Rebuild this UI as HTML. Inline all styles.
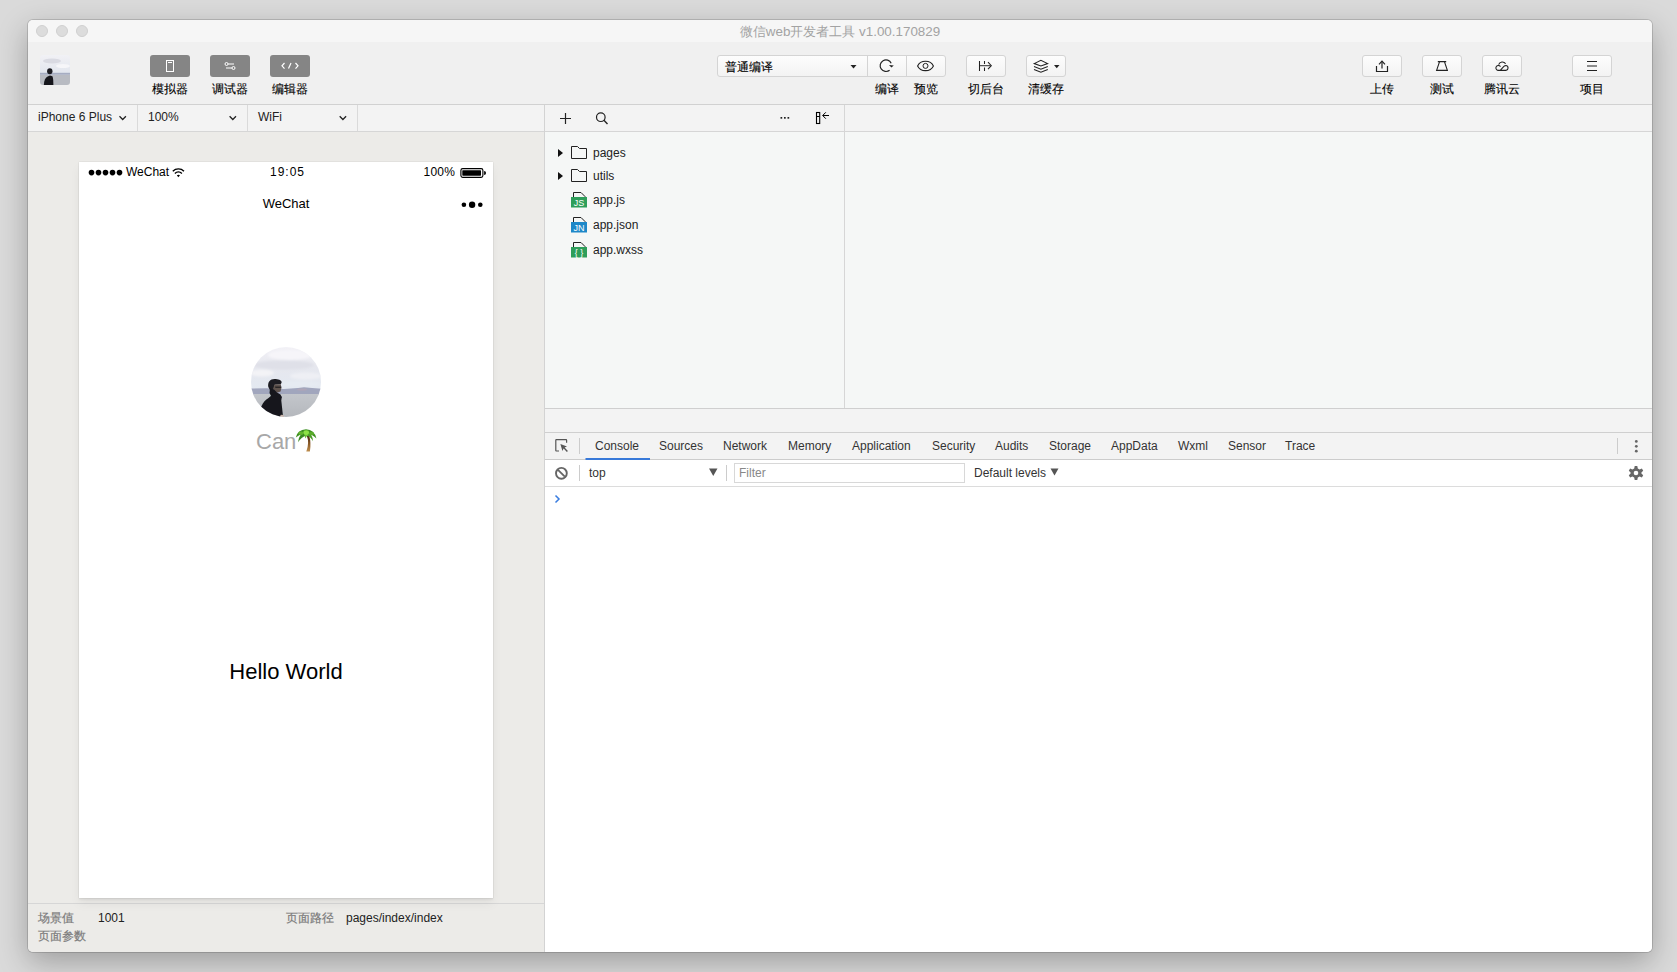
<!DOCTYPE html>
<html><head><meta charset="utf-8">
<style>
*{margin:0;padding:0;box-sizing:border-box}
html,body{width:1677px;height:972px;overflow:hidden}
body{background:#dadada;font-family:"Liberation Sans",sans-serif;position:relative;color:#222}
.a{position:absolute}
#win{left:28px;top:20px;width:1624px;height:932px;border-radius:5px;overflow:hidden;background:#f0f0f0;
 box-shadow:0 0 0 1px rgba(0,0,0,0.14),0 10px 30px rgba(0,0,0,0.28)}
#in{left:-28px;top:-20px;width:1677px;height:972px}
#title{left:28px;top:20px;width:1624px;height:22px;background:#f6f6f6}
.tl{top:25px;width:12px;height:12px;border-radius:50%;background:#dcdcdc;border:1px solid #cfcfcf}
#ttext{left:28px;top:22.6px;width:1624px;text-align:center;font-size:13.4px;color:#a3a3a3}
#tb{left:28px;top:42px;width:1624px;height:63px;background:#f0f0f0;border-bottom:1px solid #d1d1d1}
.gbtn{top:55px;width:40px;height:22px;border-radius:3px;background:#858585}
.lbl{top:82px;font-size:12px;color:#000;-webkit-text-stroke:0.12px #000;text-align:center;width:60px;line-height:14px}
.wbtn{top:55px;height:22px;border:1px solid #d4d4d4;border-radius:3px;background:linear-gradient(#fdfdfd,#f3f3f3)}
svg{position:absolute;overflow:visible}
.st{top:110px;font-size:12px;line-height:14px;color:#222}
.ph{font-size:12px;line-height:14px;color:#000}
.ft{font-size:12px;line-height:14px}
.tr{font-size:12px;line-height:14px;color:#222}
.tab{top:439px;font-size:12px;line-height:14px;color:#333}
.ct{top:466px;font-size:12px;line-height:14px}
</style></head>
<body>
<div id="win" class="a"><div id="in" class="a">
  <div id="title" class="a"></div>
  <div class="a tl" style="left:36px"></div>
  <div class="a tl" style="left:56px"></div>
  <div class="a tl" style="left:76px"></div>
  <div id="ttext" class="a">微信web开发者工具 v1.00.170829</div>
  <div id="tb" class="a"></div>
  <!-- avatar -->
  <svg width="1677" height="972" style="left:0;top:0">
    <defs><clipPath id="sa"><rect x="40" y="55" width="30" height="30" rx="3"/></clipPath>
    <linearGradient id="sky2" x1="0" y1="0" x2="0" y2="1"><stop offset="0" stop-color="#f1f1f5"/><stop offset="1" stop-color="#e2e6ee"/></linearGradient></defs>
    <g clip-path="url(#sa)">
      <rect x="40" y="55" width="30" height="18" fill="url(#sky2)"/>
      <g filter="url(#bl2)"><ellipse cx="52" cy="61" rx="9" ry="2.5" fill="#d9dae2"/><ellipse cx="63" cy="66" rx="7" ry="2" fill="#f6f6f9"/></g>
      <rect x="40" y="72.8" width="30" height="2" fill="#a6adc2"/>
      <rect x="40" y="75" width="30" height="10" fill="#b8bbc2"/>
      <g filter="url(#bl2)">
        <path d="M43.8,85.5 C44,80.5 45.2,77.8 47.6,76.6 L50,75.6 L52.4,76.2 Q53.4,78 53.4,85.5 Z" fill="#17191e"/>
        <ellipse cx="49.8" cy="71.2" rx="2.7" ry="3" fill="#1c1d22"/>
      </g>
    </g>
  </svg>
  <!-- gray buttons -->
  <div class="a gbtn" style="left:150px"></div>
  <div class="a gbtn" style="left:210px"></div>
  <div class="a gbtn" style="left:270px"></div>
  <svg width="1677" height="972" style="left:0;top:0">
    <g fill="none" stroke="#fff" stroke-width="1">
      <rect x="166.5" y="60.5" width="7" height="11"/>
      <line x1="168" y1="62.5" x2="172" y2="62.5"/>
      <circle cx="226.5" cy="64" r="1.5"/>
      <line x1="228" y1="64" x2="234" y2="64"/>
      <line x1="226" y1="68" x2="232" y2="68"/>
      <circle cx="233.5" cy="68" r="1.5"/>
      <polyline points="284.5,63 282,65.8 284.5,68.6" stroke-width="1.2"/>
      <line x1="288.5" y1="68.6" x2="291" y2="63" stroke-width="1.2"/>
      <polyline points="295.5,63 298,65.8 295.5,68.6" stroke-width="1.2"/>
    </g>
  </svg>
  <div class="a lbl" style="left:140px">模拟器</div>
  <div class="a lbl" style="left:200px">调试器</div>
  <div class="a lbl" style="left:260px">编辑器</div>

  <!-- compile select group -->
  <div class="a wbtn" style="left:717px;width:229px"></div>
  <div class="a" style="left:867px;top:55px;width:1px;height:22px;background:#d4d4d4"></div>
  <div class="a" style="left:906px;top:55px;width:1px;height:22px;background:#d4d4d4"></div>
  <div class="a" style="left:725px;top:60px;font-size:12px;line-height:14px;color:#000;-webkit-text-stroke:0.12px #000">普通编译</div>
  <div class="a wbtn" style="left:966px;width:40px"></div>
  <div class="a wbtn" style="left:1026px;width:40px"></div>
  <div class="a wbtn" style="left:1362px;width:40px"></div>
  <div class="a wbtn" style="left:1422px;width:40px"></div>
  <div class="a wbtn" style="left:1482px;width:40px"></div>
  <div class="a wbtn" style="left:1572px;width:40px"></div>
  <svg width="1677" height="972" style="left:0;top:0">
    <g fill="#222"><polygon points="850.5,65 856.5,65 853.5,68.5"/>
      <polygon points="1054,65 1059.5,65 1056.75,68.2"/></g>
    <g fill="none" stroke="#222" stroke-width="1.2">
      <path d="M889.6,70.2 A5.8,5.8 0 1 1 891.2,63.2"/>
      <path d="M917.6,65.9 C920.5,59.6 930.5,59.6 933.4,65.9 C930.5,72.2 920.5,72.2 917.6,65.9 Z" stroke-width="1.1"/>
      <circle cx="925.5" cy="65.9" r="2.5" stroke-width="1"/>
      <g stroke-width="1.05">
      <line x1="979.5" y1="61" x2="979.5" y2="71"/>
      <line x1="984.5" y1="61" x2="984.5" y2="64"/>
      <line x1="984.5" y1="67.5" x2="984.5" y2="71"/>
      <line x1="980" y1="65.6" x2="990.5" y2="65.6" stroke="#555"/>
      <polyline points="988,62.2 991.3,65.7 988,69.2"/>
      <polygon points="1034.2,63.6 1040.9,60.4 1047.6,63.6 1040.9,66"/>
      <polyline points="1034,66.5 1040.9,69.3 1047.8,66.5"/>
      <polyline points="1034,69.4 1040.9,72.3 1047.8,69.4"/>
      </g>
      <polyline points="1376.5,66 1376.5,71.5 1387.5,71.5 1387.5,66"/>
      <line x1="1382" y1="61.5" x2="1382" y2="68.5"/>
      <polyline points="1379,64.3 1382,61.2 1385,64.3"/>
      <g stroke-width="1.1"><line x1="1437.8" y1="61.6" x2="1446.2" y2="61.6"/><polyline points="1439.3,61.6 1439.3,62.5 1436.6,70.4 1447.4,70.4 1444.7,62.5 1444.7,61.6"/></g>
      <line x1="1587" y1="61.5" x2="1597" y2="61.5"/>
      <line x1="1587" y1="66" x2="1597" y2="66"/>
      <line x1="1587" y1="70.5" x2="1597" y2="70.5"/>
      <g stroke-width="1.1"><path d="M1500.5,66.6 A2.5,2.5 0 1 0 1497.9,70.4 L1505.9,70.4 A2.5,2.5 0 0 0 1505.9,65.45 Q1504.8,65.45 1503.9,66.4 L1500.2,70.3"/><path d="M1498.6,64.6 A3.9,3.9 0 0 1 1505.6,63.8"/></g>
    </g>
    <polygon points="889,64.9 893.8,65.4 891.4,67.6" fill="#222"/>
  </svg>
  <div class="a lbl" style="left:857px">编译</div>
  <div class="a lbl" style="left:896px">预览</div>
  <div class="a lbl" style="left:956px">切后台</div>
  <div class="a lbl" style="left:1016px">清缓存</div>
  <div class="a lbl" style="left:1352px">上传</div>
  <div class="a lbl" style="left:1412px">测试</div>
  <div class="a lbl" style="left:1472px">腾讯云</div>
  <div class="a lbl" style="left:1562px">项目</div>

  <!-- ===== left simulator panel ===== -->
  <div class="a" style="left:28px;top:105px;width:516px;height:27px;background:#f3f3f3;border-bottom:1px solid #d6d6d6"></div>
  <div class="a" style="left:137px;top:105px;width:1px;height:26px;background:#dadada"></div>
  <div class="a" style="left:247px;top:105px;width:1px;height:26px;background:#dadada"></div>
  <div class="a" style="left:357px;top:105px;width:1px;height:26px;background:#dadada"></div>
  <div class="a st" style="left:38px">iPhone 6 Plus</div>
  <div class="a st" style="left:148px">100%</div>
  <div class="a st" style="left:258px">WiFi</div>
  <svg width="1677" height="972" style="left:0;top:0"><g fill="none" stroke="#222" stroke-width="1.3">
    <polyline points="119.5,116.3 122.7,119.5 125.9,116.3"/>
    <polyline points="229.6,116.3 232.8,119.5 236,116.3"/>
    <polyline points="339.7,116.3 342.9,119.5 346.1,116.3"/>
  </g></svg>
  <div class="a" style="left:28px;top:132px;width:516px;height:771px;background:#ecebe8"></div>
  <div class="a" style="left:28px;top:903px;width:516px;height:1px;background:#d6d6d6"></div>
  <div class="a" style="left:28px;top:904px;width:516px;height:48px;background:#ecebe8"></div>
  <!-- phone -->
  <div class="a" style="left:79px;top:162px;width:414px;height:736px;background:#fff;box-shadow:0 0 1.5px rgba(0,0,0,0.14),0 2px 2px rgba(0,0,0,0.05),0 6px 10px rgba(0,0,0,0.05)"></div>
  <div class="a ph" style="left:126px;top:165px">WeChat</div>
  <div class="a ph" style="left:270px;top:165px;letter-spacing:1px">19:05</div>
  <div class="a ph" style="left:423.5px;top:165px;letter-spacing:0.25px">100%</div>
  <svg width="1677" height="972" style="left:0;top:0">
    <g fill="#000"><circle cx="91.5" cy="172.6" r="2.8"/><circle cx="98.5" cy="172.6" r="2.8"/><circle cx="105.5" cy="172.6" r="2.8"/><circle cx="112.5" cy="172.6" r="2.8"/><circle cx="119.5" cy="172.6" r="2.8"/>
      <circle cx="463.9" cy="204.7" r="2.3"/><circle cx="472.1" cy="204.7" r="3.2"/><circle cx="480.3" cy="204.7" r="2.3"/>
      <rect x="462.3" y="170.2" width="18.7" height="5.5" rx="0.6"/>
      <path d="M484.1,171.1 A1.9,2 0 0 1 484.1,175.1 Z"/>
    </g>
    <rect x="460.9" y="168.6" width="22" height="8.8" rx="1.8" fill="none" stroke="#000" stroke-width="1.15"/>
    <g fill="none" stroke="#000" stroke-width="1.4">
      <path d="M172.8,171.2 A8,8 0 0 1 184,171.2"/>
      <path d="M174.9,173.4 A5,5 0 0 1 181.9,173.4"/>
    </g>
    <path d="M176.8,175.3 L178.4,177.2 L180,175.3 A2.5,2.5 0 0 0 176.8,175.3Z" fill="#000"/>
  </svg>
  <div class="a" style="left:79px;top:196px;width:414px;text-align:center;font-size:13px;color:#000;line-height:15px">WeChat</div>
  <!-- avatar circle -->
  <svg width="1677" height="972" style="left:0;top:0">
    <defs>
      <clipPath id="cc"><circle cx="286" cy="382" r="35"/></clipPath>
      <linearGradient id="sky" x1="0" y1="0" x2="0" y2="1"><stop offset="0" stop-color="#f3f2f7"/><stop offset="0.45" stop-color="#e6e7ee"/><stop offset="1" stop-color="#e3e9f1"/></linearGradient>
      <linearGradient id="wat" x1="0" y1="0" x2="0" y2="1"><stop offset="0" stop-color="#c3c6cb"/><stop offset="1" stop-color="#b4b7bc"/></linearGradient>
      <filter id="bl" x="-20%" y="-20%" width="140%" height="140%"><feGaussianBlur stdDeviation="1.2"/></filter>
      <filter id="bl2"><feGaussianBlur stdDeviation="0.45"/></filter>
    </defs>
    <g clip-path="url(#cc)">
      <rect x="250" y="346" width="72" height="45" fill="url(#sky)"/>
      <g filter="url(#bl)">
        <ellipse cx="290" cy="355" rx="22" ry="5" fill="#f6f5f9"/>
        <ellipse cx="284" cy="365" rx="30" ry="4.5" fill="#dfe0e8"/>
        <ellipse cx="262" cy="373" rx="12" ry="3.5" fill="#f3f3f6"/>
        <ellipse cx="306" cy="376" rx="16" ry="3.5" fill="#eeeff4"/>
        <ellipse cx="300" cy="384" rx="20" ry="3" fill="#e6ebf2"/>
      </g>
      <path d="M250,388.5 L266,388.3 L284,389 L298,388 L304,387.3 L312,388 L322,388.8 L322,394.5 L250,394.5 Z" fill="#a1a6bd" filter="url(#bl2)"/>
      <ellipse cx="302" cy="389.6" rx="5" ry="1.2" fill="#aea6b8" filter="url(#bl2)"/>
      <rect x="250" y="394" width="72" height="24" fill="url(#wat)"/>
      <g filter="url(#bl2)">
        <path d="M259.5,418 C259,409 262.5,401.5 268.5,398 L272.5,394.5 L278.5,394.8 L281.8,397 L281.3,400.5 L283.2,418 Z" fill="#16181f"/>
        <path d="M268.3,387 C267.5,382 270,379 274.5,379 C278,379 281.5,380 281.7,382.2 L280.8,384.3 L274.8,384.8 L273.8,389 L270,390 Z" fill="#1d1d22"/>
        <path d="M274.5,384.5 L280.8,384.3 L281.4,388 L280.6,391.5 L277.5,392.5 L274,392 L273,389 Z" fill="#5e524e"/>
        <path d="M270,388 L274,389.5 L277,392.5 L280.5,394.5 L282,397.5 L272,398 L269.5,393 Z" fill="#17181d"/>
        <path d="M275,386.4 L281.3,386.4 L281.2,388 L275.4,388 Z" fill="#2a2628"/>
        <path d="M280.5,415 Q282.5,414 284,416 L284,418 L280,418 Z" fill="#c9b3a8"/>
      </g>
    </g>
  </svg>
  <div class="a" style="left:256px;top:429px;font-size:22px;line-height:25px;color:#a8a8a8">Can</div>
  <svg width="1677" height="972" style="left:0;top:0">
    <defs><linearGradient id="trk" x1="0" y1="0" x2="0" y2="1"><stop offset="0" stop-color="#4a2a12"/><stop offset="0.5" stop-color="#8a5a28"/><stop offset="1" stop-color="#c09050"/></linearGradient></defs>
    <path d="M306.9,436 Q309.6,443 306.3,451.6 L309.9,451.6 Q311.3,443 309.3,436 Z" fill="url(#trk)"/>
    <g filter="url(#bl2)">
      <path d="M295.8,437.5 Q297.5,429.6 306,429.2 Q314.5,429.6 316.4,438.5 Q312.5,433.8 306,434.2 Q299.5,433.8 295.8,437.5 Z" fill="#3f9022"/>
      <path d="M305.5,432.2 Q299,433 298,442.3 Q301.2,437.2 306.5,435.2 Z" fill="#3a8a20"/>
      <path d="M306.8,432.2 Q312.8,433.8 313,441.2 Q310.8,436.6 306.2,435.2 Z" fill="#4a9d26"/>
      <path d="M304.2,433 Q304.6,436.8 305.4,438.6 Q307.2,436.2 308,433 Z" fill="#6abf32"/>
      <ellipse cx="301" cy="433.2" rx="2.6" ry="1.8" fill="#62b52e"/>
      <ellipse cx="311.5" cy="433.5" rx="2.6" ry="1.8" fill="#5aad2c"/>
      <ellipse cx="306.2" cy="432.6" rx="2.8" ry="2.3" fill="#8de244"/>
    </g>
  </svg>
  <div class="a" style="left:79px;top:659px;width:414px;text-align:center;font-size:22px;line-height:25px;color:#000">Hello World</div>
  <!-- footer -->
  <div class="a ft" style="left:38px;top:911px;color:#7c7c7c;-webkit-text-stroke:0.2px #7c7c7c">场景值</div>
  <div class="a ft" style="left:98px;top:911px;color:#222">1001</div>
  <div class="a ft" style="left:286px;top:911px;color:#7c7c7c;-webkit-text-stroke:0.2px #7c7c7c">页面路径</div>
  <div class="a ft" style="left:346px;top:911px;color:#222">pages/index/index</div>
  <div class="a ft" style="left:38px;top:929px;color:#7c7c7c;-webkit-text-stroke:0.2px #7c7c7c">页面参数</div>
  <div class="a" style="left:544px;top:105px;width:1px;height:847px;background:#d3d3d3"></div>

  <!-- ===== right panel ===== -->
  <div class="a" style="left:545px;top:105px;width:1107px;height:27px;background:#f3f3f3;border-bottom:1px solid #d6d6d6"></div>
  <div class="a" style="left:545px;top:132px;width:299px;height:276px;background:#f5f7f6"></div>
  <div class="a" style="left:845px;top:132px;width:807px;height:276px;background:#f5f7f6"></div>
  <div class="a" style="left:844px;top:105px;width:1px;height:303px;background:#d6d6d6"></div>
  <div class="a" style="left:545px;top:408px;width:1107px;height:1px;background:#cfcfcf"></div>
  <div class="a" style="left:545px;top:409px;width:1107px;height:23px;background:#f3f3f3"></div>
  <div class="a" style="left:545px;top:432px;width:1107px;height:1px;background:#cfcfcf"></div>
  <div class="a" style="left:545px;top:433px;width:1107px;height:26px;background:#f3f3f3"></div>
  <div class="a" style="left:545px;top:459px;width:1107px;height:1px;background:#cccccc"></div>
  <div class="a" style="left:545px;top:460px;width:1107px;height:492px;background:#fff"></div>
  <div class="a" style="left:545px;top:486px;width:1107px;height:1px;background:#dcdcdc"></div>
  <!-- editor toolbar icons -->
  <svg width="1677" height="972" style="left:0;top:0">
    <g fill="none" stroke="#222" stroke-width="1.2">
      <line x1="560" y1="118.5" x2="571" y2="118.5"/><line x1="565.5" y1="113" x2="565.5" y2="124"/>
      <circle cx="600.8" cy="117.2" r="4.3"/><line x1="603.9" y1="120.3" x2="607.5" y2="123.9" stroke-width="1.4"/>
      <rect x="816.5" y="112.5" width="3.2" height="11" stroke="#000" stroke-width="1.1"/><line x1="816.5" y1="116.5" x2="819.7" y2="116.5" stroke="#000" stroke-width="1"/>
      <polyline points="825.8,112.3 822.7,115.5 825.8,118.7" stroke="#000" stroke-width="1"/><line x1="822.8" y1="115.5" x2="829" y2="115.5" stroke="#000" stroke-width="1"/>
    </g>
    <g fill="#222"><rect x="780.5" y="117" width="1.7" height="1.7"/><rect x="784" y="117" width="1.7" height="1.7"/><rect x="787.5" y="117" width="1.7" height="1.7"/></g>
    <!-- tree -->
    <g fill="#111">
      <polygon points="558,149 563,153 558,157"/>
      <polygon points="558,172 563,176 558,180"/>
    </g>
    <g fill="none" stroke="#222" stroke-width="1">
      <path d="M571.5,146.5 L577.5,146.5 L579.5,148.5 L586.5,148.5 L586.5,158.5 L571.5,158.5 Z"/>
      <path d="M571.5,169.5 L577.5,169.5 L579.5,171.5 L586.5,171.5 L586.5,181.5 L571.5,181.5 Z"/>
    </g>
    <g>
      <path d="M573.5,198 L573.5,192.5 L581,192.5 L585,196.5 L585,198" fill="none" stroke="#222" stroke-width="1"/>
      <rect x="571" y="197" width="16" height="10.5" fill="#2e9e5a"/>
      <text x="579" y="206" font-size="9" fill="#fff" text-anchor="middle" font-family="Liberation Sans">JS</text>
      <path d="M573.5,223 L573.5,217.5 L581,217.5 L585,221.5 L585,223" fill="none" stroke="#222" stroke-width="1"/>
      <rect x="571" y="222" width="16" height="10.5" fill="#1e88c8"/>
      <text x="579" y="231" font-size="9" fill="#fff" text-anchor="middle" font-family="Liberation Sans">JN</text>
      <path d="M573.5,248 L573.5,242.5 L581,242.5 L585,246.5 L585,248" fill="none" stroke="#222" stroke-width="1"/>
      <rect x="571" y="247" width="16" height="10.5" fill="#2e9e5a"/>
      <text x="579" y="256" font-size="9" fill="#fff" text-anchor="middle" font-family="Liberation Sans">{ }</text>
    </g>
  </svg>
  <div class="a tr" style="left:593px;top:146px">pages</div>
  <div class="a tr" style="left:593px;top:169px">utils</div>
  <div class="a tr" style="left:593px;top:193px">app.js</div>
  <div class="a tr" style="left:593px;top:218px">app.json</div>
  <div class="a tr" style="left:593px;top:243px">app.wxss</div>
  <!-- devtools tabs -->
  <svg width="1677" height="972" style="left:0;top:0">
    <g fill="none" stroke="#555" stroke-width="1.2">
      <path d="M559,451 L556.3,451 Q555.8,451 555.8,450.5 L555.8,440.2 Q555.8,439.7 556.3,439.7 L566.1,439.7 Q566.6,439.7 566.6,440.2 L566.6,442.8" stroke-width="1.2"/>
    </g>
    <path d="M560.4,444 L567,446.4 L564.6,447.6 L567.9,450.9 L566.9,451.9 L563.6,448.6 L562.4,451 Z" fill="#555"/>
    <rect x="585.5" y="458" width="64.5" height="2" fill="#3879d9"/>
    <circle cx="561.4" cy="473.3" r="5.4" fill="none" stroke="#666" stroke-width="1.9"/>
    <line x1="558" y1="469.9" x2="564.8" y2="476.7" stroke="#666" stroke-width="1.8"/>
    <polygon points="709,468.5 717.5,468.5 713.25,476" fill="#555"/>
    <polygon points="1050.5,468.5 1058.5,468.5 1054.5,475.5" fill="#555"/>
    <path d="M555.5,495.5 L559,499 L555.5,502.5" fill="none" stroke="#3a7de0" stroke-width="1.5"/>
    <g fill="#666"><circle cx="1636.3" cy="441.4" r="1.4"/><circle cx="1636.3" cy="446.3" r="1.4"/><circle cx="1636.3" cy="451.2" r="1.4"/></g>
    <g transform="translate(1636,473)" fill="#666">
      <path d="M-1.3,-7 L1.3,-7 L1.8,-4.6 L3.6,-3.6 L5.9,-4.5 L7.2,-2.2 L5.4,-0.6 L5.4,0.6 L7.2,2.2 L5.9,4.5 L3.6,3.6 L1.8,4.6 L1.3,7 L-1.3,7 L-1.8,4.6 L-3.6,3.6 L-5.9,4.5 L-7.2,2.2 L-5.4,0.6 L-5.4,-0.6 L-7.2,-2.2 L-5.9,-4.5 L-3.6,-3.6 L-1.8,-4.6 Z"/>
      <circle r="2.3" fill="#fff"/>
    </g>
  </svg>
  <div class="a" style="left:579px;top:438px;width:1px;height:16px;background:#ccc"></div>
  <div class="a" style="left:1617px;top:438px;width:1px;height:16px;background:#ccc"></div>
  <div class="a" style="left:579px;top:465px;width:1px;height:16px;background:#ccc"></div>
  <div class="a" style="left:726px;top:465px;width:1px;height:16px;background:#ccc"></div>
  <div class="a" style="left:734px;top:463px;width:231px;height:20px;border:1px solid #d8d8d8;background:#fff"></div>
  <div class="a tab" style="left:595px;color:#333">Console</div>
  <div class="a tab" style="left:659px">Sources</div>
  <div class="a tab" style="left:723px">Network</div>
  <div class="a tab" style="left:788px">Memory</div>
  <div class="a tab" style="left:852px">Application</div>
  <div class="a tab" style="left:932px">Security</div>
  <div class="a tab" style="left:995px">Audits</div>
  <div class="a tab" style="left:1049px">Storage</div>
  <div class="a tab" style="left:1111px">AppData</div>
  <div class="a tab" style="left:1178px">Wxml</div>
  <div class="a tab" style="left:1228px">Sensor</div>
  <div class="a tab" style="left:1285px">Trace</div>
  <div class="a ct" style="left:589px;color:#333">top</div>
  <div class="a ct" style="left:739px;color:#888">Filter</div>
  <div class="a ct" style="left:974px;color:#333">Default levels</div>
</div></div>
</body></html>
